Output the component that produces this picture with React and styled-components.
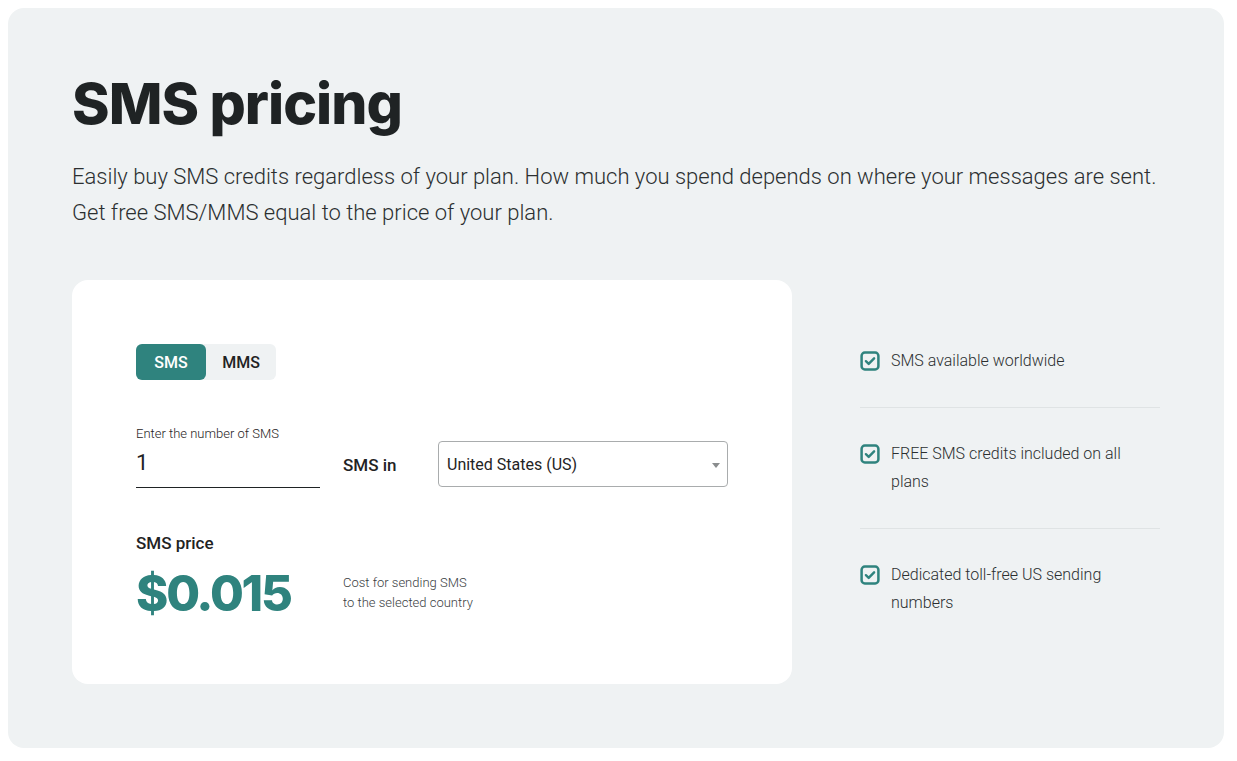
import React, { useState } from "react";
import styled, { createGlobalStyle } from "styled-components";

const Global = createGlobalStyle`
  body {
    margin: 8px;
    background: #ffffff;
    font-family: Roboto, "Liberation Sans", sans-serif;
    color: #1f2324;
  }
  * { box-sizing: border-box; }
`;

const TEAL = "#2f837e";

const Section = styled.section`
  width: 1216px;
  background: #eff2f3;
  border-radius: 16px;
  padding: 61px 64px 64px;
  height: 740px;
`;

const Title = styled.h1`
  margin: 0;
  font-family: Inter, "Liberation Sans", sans-serif;
  font-weight: 800;
  font-size: 57px;
  line-height: 70px;
  letter-spacing: -1px;
  color: #1f2324;
`;

const Lead = styled.p`
  margin: 20px 0 0;
  font-family: Roboto, "Liberation Sans", sans-serif;
  font-weight: 300;
  font-size: 22px;
  line-height: 36px;
  color: #2b2f30;
`;

const Body = styled.div`
  margin-top: 49px;
  display: flex;
  gap: 68px;
  align-items: center;
`;

const Card = styled.div`
  width: 720px;
  height: 404px;
  background: #ffffff;
  border-radius: 16px;
  padding: 64px;
`;

const Toggle = styled.div`
  display: inline-flex;
  background: #eff2f3;
  border-radius: 6px;
`;

const ToggleBtn = styled.button`
  width: 70px;
  height: 36px;
  border: 0;
  border-radius: 6px;
  font-family: Roboto, "Liberation Sans", sans-serif;
  font-size: 16px;
  font-weight: 500;
  cursor: pointer;
  background: ${(p) => (p.$active ? TEAL : "transparent")};
  color: ${(p) => (p.$active ? "#ffffff" : "#1f2324")};
`;

const Grid = styled.div`
  display: grid;
  grid-template-columns: 184px 72px 290px;
  column-gap: 23px;
  align-items: end;
  margin-top: 47px;
`;

const Field = styled.label`
  display: flex;
  flex-direction: column;
`;

const FieldLabel = styled.span`
  font-size: 13px;
  font-weight: 300;
  line-height: 14px;
  color: #1f2324;
`;

const NumberInput = styled.input`
  border: 0;
  border-bottom: 1px solid #1f2324;
  height: 47px;
  padding: 0 0 4px;
  font-family: Roboto, "Liberation Sans", sans-serif;
  font-size: 22px;
  color: #1f2324;
  background: transparent;
  outline: none;
  width: 100%;
`;

const InLabel = styled.span`
  font-size: 17px;
  font-weight: 500;
  line-height: 46px;
  color: #1f2324;
`;

const SelectBox = styled.div`
  position: relative;
  height: 46px;
  border: 1px solid #a9acad;
  border-radius: 4px;
  display: flex;
  align-items: center;
  padding: 0 8px;
  font-size: 16px;
  color: #1f2324;
  margin-bottom: 1px;
`;

const Caret = styled.span`
  position: absolute;
  right: 7px;
  top: 21px;
  width: 0;
  height: 0;
  border-left: 4px solid transparent;
  border-right: 4px solid transparent;
  border-top: 5px solid #8a8d8e;
`;

const PriceGrid = styled.div`
  display: grid;
  grid-template-columns: 184px auto;
  column-gap: 23px;
  margin-top: 45px;
`;

const PriceLabel = styled.div`
  grid-column: 1 / -1;
  font-size: 17px;
  font-weight: 500;
  line-height: 20px;
  color: #1f2324;
`;

const Price = styled.div`
  font-family: Inter, "Liberation Sans", sans-serif;
  font-weight: 800;
  font-size: 49px;
  line-height: 60px;
  letter-spacing: -2.2px;
  color: ${TEAL};
  margin-top: 11px;
`;

const Caption = styled.div`
  font-size: 13px;
  line-height: 20px;
  color: #3a3e3f;
  font-weight: 300;
  margin-top: 20px;
`;

const List = styled.ul`
  list-style: none;
  margin: 0;
  padding: 0;
  width: 300px;
`;

const Item = styled.li`
  display: flex;
  gap: 11px;
  padding: 32px 0;
  font-size: 16px;
  font-weight: 300;
  line-height: 28px;
  color: #2b2f30;
  &:first-child { padding-top: 0; }
  &:last-child { padding-bottom: 0; }
  & + & { border-top: 1px solid #dfe3e4; }
`;

const CheckIcon = styled.svg`
  flex: none;
  width: 20px;
  height: 20px;
  margin-top: 4px;
`;

const Check = () => (
  <CheckIcon viewBox="0 0 20 20" fill="none">
    <rect x="1.6" y="1.6" width="16.8" height="16.8" rx="3.2" stroke={TEAL} strokeWidth="2.5" />
    <path d="M5.9 10.2 L8.7 12.9 L14.1 7.3" stroke={TEAL} strokeWidth="2.4" strokeLinecap="round" strokeLinejoin="round" />
  </CheckIcon>
);

export default function App() {
  const [mode, setMode] = useState("SMS");
  return (
    <>
      <Global />
      <Section>
        <Title>SMS pricing</Title>
        <Lead>
          Easily buy SMS credits regardless of your plan. How much you spend depends on where your messages are sent.
          <br />
          Get free SMS/MMS equal to the price of your plan.
        </Lead>
        <Body>
          <Card>
            <Toggle>
              <ToggleBtn $active={mode === "SMS"} onClick={() => setMode("SMS")}>SMS</ToggleBtn>
              <ToggleBtn $active={mode === "MMS"} onClick={() => setMode("MMS")}>MMS</ToggleBtn>
            </Toggle>
            <Grid>
              <Field>
                <FieldLabel>Enter the number of SMS</FieldLabel>
                <NumberInput defaultValue="1" />
              </Field>
              <InLabel>SMS in</InLabel>
              <SelectBox>
                United States (US)
                <Caret />
              </SelectBox>
            </Grid>
            <PriceGrid>
              <PriceLabel>SMS price</PriceLabel>
              <Price>$0.015</Price>
              <Caption>
                Cost for sending SMS
                <br />
                to the selected country
              </Caption>
            </PriceGrid>
          </Card>
          <List>
            <Item><Check />SMS available worldwide</Item>
            <Item><Check />FREE SMS credits included on all plans</Item>
            <Item><Check />Dedicated toll-free US sending numbers</Item>
          </List>
        </Body>
      </Section>
    </>
  );
}
